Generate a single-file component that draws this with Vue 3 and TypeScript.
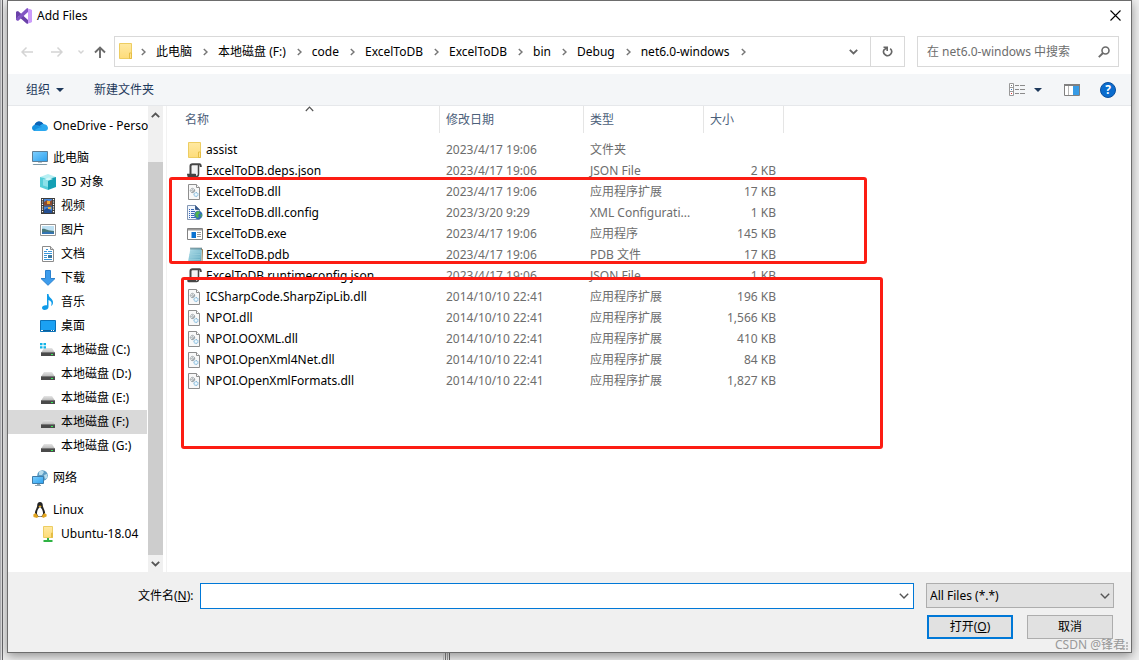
<script setup lang="ts">
import { ref } from 'vue'

interface NavItem {
  label: string
  icon: string
  level: 0 | 1
  group?: boolean
}

interface FileRow {
  name: string
  icon: string
  date: string
  type: string
  size: string
}

const crumbs: string[] = [
  '此电脑',
  '本地磁盘 (F:)',
  'code',
  'ExcelToDB',
  'ExcelToDB',
  'bin',
  'Debug',
  'net6.0-windows',
]

const navItems: NavItem[] = [
  { label: 'OneDrive - Perso', icon: 'onedrive', level: 0 },
  { label: '此电脑', icon: 'pc', level: 0, group: true },
  { label: '3D 对象', icon: 'cube', level: 1 },
  { label: '视频', icon: 'video', level: 1 },
  { label: '图片', icon: 'picture', level: 1 },
  { label: '文档', icon: 'document', level: 1 },
  { label: '下载', icon: 'download', level: 1 },
  { label: '音乐', icon: 'music', level: 1 },
  { label: '桌面', icon: 'desktop', level: 1 },
  { label: '本地磁盘 (C:)', icon: 'sysdrive', level: 1 },
  { label: '本地磁盘 (D:)', icon: 'drive', level: 1 },
  { label: '本地磁盘 (E:)', icon: 'drive', level: 1 },
  { label: '本地磁盘 (F:)', icon: 'drive', level: 1 },
  { label: '本地磁盘 (G:)', icon: 'drive', level: 1 },
  { label: '网络', icon: 'network', level: 0, group: true },
  { label: 'Linux', icon: 'linux', level: 0, group: true },
  { label: 'Ubuntu-18.04', icon: 'netfolder', level: 1 },
]

const files: FileRow[] = [
  { name: 'assist', icon: 'folder', date: '2023/4/17 19:06', type: '文件夹', size: '' },
  { name: 'ExcelToDB.deps.json', icon: 'json', date: '2023/4/17 19:06', type: 'JSON File', size: '2 KB' },
  { name: 'ExcelToDB.dll', icon: 'dll', date: '2023/4/17 19:06', type: '应用程序扩展', size: '17 KB' },
  { name: 'ExcelToDB.dll.config', icon: 'config', date: '2023/3/20 9:29', type: 'XML Configurati...', size: '1 KB' },
  { name: 'ExcelToDB.exe', icon: 'exe', date: '2023/4/17 19:06', type: '应用程序', size: '145 KB' },
  { name: 'ExcelToDB.pdb', icon: 'pdb', date: '2023/4/17 19:06', type: 'PDB 文件', size: '17 KB' },
  { name: 'ExcelToDB.runtimeconfig.json', icon: 'json', date: '2023/4/17 19:06', type: 'JSON File', size: '1 KB' },
  { name: 'ICSharpCode.SharpZipLib.dll', icon: 'dll', date: '2014/10/10 22:41', type: '应用程序扩展', size: '196 KB' },
  { name: 'NPOI.dll', icon: 'dll', date: '2014/10/10 22:41', type: '应用程序扩展', size: '1,566 KB' },
  { name: 'NPOI.OOXML.dll', icon: 'dll', date: '2014/10/10 22:41', type: '应用程序扩展', size: '410 KB' },
  { name: 'NPOI.OpenXml4Net.dll', icon: 'dll', date: '2014/10/10 22:41', type: '应用程序扩展', size: '84 KB' },
  { name: 'NPOI.OpenXmlFormats.dll', icon: 'dll', date: '2014/10/10 22:41', type: '应用程序扩展', size: '1,827 KB' },
]

const current = ref(12)
const search = ref('')
const fileName = ref('')
const filter = ref('all')
</script>

<template>
  <div class="desktop">
    <svg class="sprite" width="0" height="0" aria-hidden="true">
      <defs>
        <linearGradient id="g-folder" x1="0" y1="0" x2="0" y2="1">
          <stop offset="0" stop-color="#ffe9a2" /><stop offset="1" stop-color="#fddc7a" />
        </linearGradient>
        <linearGradient id="g-screen" x1="0" y1="0" x2="1" y2="1">
          <stop offset="0" stop-color="#7fd0ff" /><stop offset="1" stop-color="#2ba0ee" />
        </linearGradient>
        <linearGradient id="g-drive" x1="0" y1="0" x2="0" y2="1">
          <stop offset="0" stop-color="#e6e6e6" /><stop offset="1" stop-color="#bcbcbc" />
        </linearGradient>
        <linearGradient id="g-pdb" x1="0" y1="0" x2="1" y2="1">
          <stop offset="0" stop-color="#b9e4ee" /><stop offset="1" stop-color="#5aa5bd" />
        </linearGradient>
      </defs>

      <symbol id="i-vs" viewBox="0 0 16 16">
        <path d="M0 3.800L2 3L12 12V15.900L10.500 15.500L2 8V11L0 12Z" fill="#6a41a8" />
        <path d="M0 12L2 13L12 4V.1L10.500 .5L0 10.400Z" fill="#8256c4" />
        <path d="M11 .2L15.900 2V14L11 15.900L12 15V1Z" fill="#c08ff5" />
        <path d="M12 1L15.900 2V14L12 15Z" fill="#cb9bfa" />
      </symbol>
      <symbol id="i-folder" viewBox="0 0 16 16">
        <path d="M1.500 .5H13.500V15.500H1.500Z" fill="url(#g-folder)" stroke="#edcd62" />
        <path d="M11.500 10H13.500V15.500H11.500Z" fill="#ffe48f" stroke="#e5bd45" />
      </symbol>
      <symbol id="i-onedrive" viewBox="0 0 16 16">
        <path d="M2.500 7.500C3.500 3.500 8.500 1.500 11.500 6L13 9L3 12Z" fill="#0f5fb5" />
        <path d="M0 10C0 7.500 2.500 6 5 7L11 10L5 13H3C1.200 13 0 11.500 0 10Z" fill="#1490df" />
        <path d="M5 8L10.500 6C14 5.500 16 8 16 10C16 12 14.500 13 13 13H3C2.500 11 7 9.500 10 9Z" fill="#2ba8ef" />
        <path d="M2.500 7C3.500 3 8.500 2 11 5.800C8.500 6 8.500 8 7.500 8C6 7 4 6.300 2.500 7Z" fill="#0a64b7" />
      </symbol>
      <symbol id="i-pc" viewBox="0 0 16 16">
        <path d="M.5 1.500H15.500V11.500H.5Z" fill="url(#g-screen)" stroke="#5e7f97" />
        <path d="M6 12H10V13H6Z" fill="#b9c5cc" />
        <path d="M1.500 14H14.500L15.500 15H.5Z" fill="#7d98a6" />
      </symbol>
      <symbol id="i-cube" viewBox="0 0 16 16">
        <path d="M0 3L8 0L16 3L8 6Z" fill="#b7eff3" />
        <path d="M0 3L8 5V16L0 13Z" fill="#56ced9" />
        <path d="M16 3L8 5V16L16 13Z" fill="#149fb3" />
        <path d="M4 5L9 3.500L13 5L8 6.800Z" fill="#d5f7f9" />
        <path d="M3 5L8 6.500V13L3 11.500Z" fill="#8be1e9" />
      </symbol>
      <symbol id="i-video" viewBox="0 0 16 16">
        <path d="M1 0H15V16H1Z" fill="#3c3c3c" />
        <path d="M4 1H12V7.500H4ZM4 8.500H12V15H4Z" fill="#4687dc" />
        <path d="M4 4L7 2L9 4L12 2V7.500H4Z" fill="#8a4a30" />
        <path d="M7 3H10V6H7Z" fill="#f0a831" />
        <path d="M4 12L7 10L12 13V15H4Z" fill="#244f92" />
        <path d="M8 9H11V11H8Z" fill="#e5ad42" />
        <path d="M2.500 1V15M13.500 1V15" stroke="#fff" stroke-width="1.200" stroke-dasharray="1.200 1.200" />
      </symbol>
      <symbol id="i-picture" viewBox="0 0 16 16">
        <path d="M.5 2.500H15.500V13.500H.5Z" fill="#fff" stroke="#949494" />
        <path d="M2 4H14V12H2Z" fill="#bde0f3" />
        <path d="M2 7C5 6 7 9 14 9V12H2Z" fill="#48787a" />
        <path d="M2 10.500C6 9 10 10 14 10.500V12H2Z" fill="#3273b3" />
      </symbol>
      <symbol id="i-document" viewBox="0 0 16 16">
        <path d="M2.500 .5H10.500L13.500 3.500V15.500H2.500Z" fill="#fff" stroke="#8b8b8b" />
        <path d="M10.500 .5V3.500H13.500" fill="#ddd" stroke="#8b8b8b" />
        <path d="M6 3.500H8M4 5.500H7M8 5.500H12M4 7.500H12M4 9.500H7M4 11.500H7M4 13.500H12" stroke="#3b96d9" />
        <path d="M8 9H12V12H8Z" fill="#3c789f" />
      </symbol>
      <symbol id="i-download" viewBox="0 0 16 16">
        <path d="M5.500 .5H10.500V8.500H15L8 15.300L1 8.500H5.500Z" fill="#3d9cec" stroke="#2c82ce" />
      </symbol>
      <symbol id="i-music" viewBox="0 0 16 16">
        <path d="M7 0H8.500C8.500 4 13.500 4.500 13 9C12.800 10.500 12 11.500 11 12C12.500 8.500 11 7 8.500 6V13C8.500 15 6.500 16 4.500 16C2.800 16 2 15 2 13.800C2 12 4.500 10.700 7 11.300Z" fill="#0f9be9" />
      </symbol>
      <symbol id="i-desktop" viewBox="0 0 16 16">
        <path d="M.5 2.500H15.500V13.500H.5Z" fill="#1ba1f3" stroke="#0b72b9" />
        <path d="M1 12H15V13H1Z" fill="#0f5f98" />
        <path d="M1 12H3V13H1ZM11 12H12V13H11ZM13 12H14V13H13Z" fill="#fff" />
      </symbol>
      <symbol id="i-drive" viewBox="0 0 16 16">
        <path d="M4 6H12L14.500 10H1.500Z" fill="url(#g-drive)" />
        <path d="M1 10H15V14H1Z" fill="#4a4a4a" />
        <path d="M1 10H15V11H1Z" fill="#777" />
        <path d="M11 12H13V13H11Z" fill="#36ef57" />
      </symbol>
      <symbol id="i-sysdrive" viewBox="0 0 16 16">
        <path d="M4 6H12L14.500 10H1.500Z" fill="url(#g-drive)" />
        <path d="M1 10H15V14H1Z" fill="#4a4a4a" />
        <path d="M1 10H15V11H1Z" fill="#777" />
        <path d="M11 12H13V13H11Z" fill="#36ef57" />
        <path d="M0 1H2.500V3.300H0ZM3.500 1H6V3.300H3.500ZM0 4.200H2.500V6.500H0ZM3.500 4.200H6V6.500H3.500Z" fill="#12b4e8" />
      </symbol>
      <symbol id="i-network" viewBox="0 0 16 16">
        <circle cx="10.500" cy="5.500" r="5.300" fill="#5c9cc4" />
        <path d="M7 2C9 0 11 1 12 2L10 5L7 5ZM12 5L15 4V8L13 9Z" fill="#b7dcec" />
        <path d="M.5 6.500H11.500V13.500H.5Z" fill="url(#g-screen)" stroke="#3f7ca8" />
        <path d="M5 14H8V15H9V16H3V15H5Z" fill="#8fa6b3" />
      </symbol>
      <symbol id="i-linux" viewBox="0 0 16 16">
        <path d="M8 0C10 0 11 1.500 10.800 4C11.500 7 13.500 9 13 12L11 15H5L3 12C2.500 9 4.700 7 5.200 4C5 1.500 6 0 8 0Z" fill="#252525" />
        <path d="M8 5C9.500 6 11.300 9 11 12L9.500 14.500H6.500L5 12C4.700 9 6.500 6 8 5Z" fill="#fff" />
        <path d="M6.300 4.200L8 3.500L9.700 4.200L8 5.500Z" fill="#f0b323" />
        <path d="M1.300 12.500L3.500 11L6.500 14.500L5 16L1.500 15ZM14.700 12.500L12.500 11L9.700 14L11 16L14.500 14.500Z" fill="#e2a51f" />
      </symbol>
      <symbol id="i-netfolder" viewBox="0 0 16 16">
        <path d="M3.500 .5H12.500V11.500H3.500Z" fill="url(#g-folder)" stroke="#edcd62" />
        <path d="M11.500 7H12.500V11.500H11.500Z" fill="#ffe48f" stroke="#e5bd45" />
        <path d="M7 12H9V14H12.500V16H3.500V14H7Z" fill="#2fb344" />
      </symbol>
      <symbol id="i-json" viewBox="0 0 16 16">
        <path d="M4 2H12V13H4Z" fill="#f2f2f2" />
        <path d="M3.500 11.500V3C3.500 1.800 4.300 1.200 5.500 1.200H12.500C13.500 1.200 13.800 2 13.800 4" fill="none" stroke="#454545" stroke-width="2" />
        <path d="M11.500 2V11C11.500 13 10.500 13.500 9.500 13.500H2C1 13.500 .8 12.500 .8 11.500H8.500" fill="none" stroke="#454545" stroke-width="1.500" />
        <path d="M1 11H9V14H1Z" fill="#454545" />
      </symbol>
      <symbol id="i-dll" viewBox="0 0 16 16">
        <path d="M1.500 .5H9.500L12.500 3.500V15.500H1.500Z" fill="#f8f8f8" stroke="#8e8e8e" />
        <path d="M9.500 .5V3.500H12.500" fill="#fff" stroke="#8e8e8e" />
        <circle cx="5.500" cy="6.500" r="2.200" fill="#eee" stroke="#929ba0" stroke-dasharray="1.300 .5" />
        <circle cx="5.500" cy="6.500" r=".8" fill="#fff" stroke="#8a949a" stroke-width=".7" />
        <path d="M5 9L8 6M7 11L10 8" stroke="#929ba0" stroke-width=".8" />
        <circle cx="9" cy="10.500" r="2.100" fill="#cfe8f7" stroke="#7db5d8" stroke-dasharray="1.200 .5" />
        <circle cx="9" cy="10.500" r=".8" fill="#fff" />
      </symbol>
      <symbol id="i-config" viewBox="0 0 16 16">
        <path d="M.5 .5H8.500L12.500 4.500V14.500H.5Z" fill="#f2f7fd" stroke="#8397b4" />
        <path d="M8.500 .5V4.500H12.500" fill="#35588c" stroke="#43638f" />
        <path d="M2 4.500H3M4 4.500H7M2 6.500H3M4 6.500H8M2 8.500H3M4 8.500H7M2 10.500H3M4 10.500H7M2 12.500H3M4 12.500H8" stroke="#3767b7" />
        <circle cx="11.300" cy="10" r="4.200" fill="#3270b5" />
        <path d="M9 7L12 6L13 8L11 10L12 12L10 13L8 10ZM13.500 9L15.300 10L14 12.500Z" fill="#51b34c" />
      </symbol>
      <symbol id="i-exe" viewBox="0 0 16 16">
        <path d="M.5 2.500H15.500V13.500H.5Z" fill="#fff" stroke="#828282" />
        <path d="M1 3H15V4.500H1Z" fill="#9b9b9b" />
        <path d="M4.500 6H9V12H4.500Z" fill="#0b72d1" />
        <path d="M10 6.500H14M10 8.500H14M10 10.500H14" stroke="#999" />
      </symbol>
      <symbol id="i-pdb" viewBox="0 0 16 16">
        <path d="M3.500 1H15L14 15H1Z" fill="url(#g-pdb)" />
        <path d="M14 2L15.500 2.500L15 14L13.500 15.500" fill="none" stroke="#937b50" />
        <path d="M3.500 1.500H15" stroke="#4d6870" stroke-width="2" stroke-dasharray="1 1" />
        <path d="M3 5H13.500M2.500 7.500H13.300M2.300 10H13M2 12.500H13" stroke="#9bd0dd" stroke-width=".7" />
        <path d="M.5 15H13.500" stroke="#567f8e" />
      </symbol>
      <symbol id="i-down" viewBox="0 0 10 6">
        <path d="M.8 .8L5 5L9.200 .8" fill="none" stroke="currentColor" stroke-width="1.400" />
      </symbol>
      <symbol id="i-tri" viewBox="0 0 8 4">
        <path d="M0 0H8L4 4Z" fill="currentColor" />
      </symbol>
    </svg>

    <main class="dialog" role="dialog" aria-labelledby="dialog-title">
      <header class="titlebar">
        <svg class="ic" aria-hidden="true"><use href="#i-vs" /></svg>
        <h1 id="dialog-title">Add Files</h1>
        <button class="close" type="button" aria-label="Close">
          <svg width="11" height="11" viewBox="0 0 11 11"><path d="M.5 .5L10.500 10.500M10.500 .5L.5 10.500" stroke="#000" stroke-width="1.100" /></svg>
        </button>
      </header>

      <div class="addressrow">
        <button class="hist dim" type="button" aria-label="Back">
          <svg width="12" height="12" viewBox="0 0 12 12"><path d="M12 6H1M5.500 1.500L1 6L5.500 10.500" fill="none" stroke="currentColor" stroke-width="1.500" /></svg>
        </button>
        <button class="hist dim" type="button" aria-label="Forward">
          <svg width="12" height="12" viewBox="0 0 12 12"><path d="M0 6H11M6.500 1.500L11 6L6.500 10.500" fill="none" stroke="currentColor" stroke-width="1.500" /></svg>
        </button>
        <button class="recent dim" type="button" aria-label="Recent locations">
          <svg width="6" height="4" viewBox="0 0 6 4"><path d="M.5 .5L3 3L5.500 .5" fill="none" stroke="currentColor" stroke-width="1.400" /></svg>
        </button>
        <button class="up" type="button" aria-label="Up">
          <svg width="12" height="12" viewBox="0 0 12 12"><path d="M6 12V1.500M1 6.500L6 1.500L11 6.500" fill="none" stroke="currentColor" stroke-width="1.900" /></svg>
        </button>
        <div class="address">
          <svg class="ic" aria-hidden="true"><use href="#i-folder" /></svg>
          <nav class="crumbs" aria-label="Path">
            <svg class="sep" width="5" height="8" viewBox="0 0 5 8"><path d="M.8 1L4 4L.8 7" fill="none" stroke="currentColor" stroke-width="1.500" /></svg>
            <template v-for="(crumb, i) in crumbs" :key="i">
              <button type="button">{{ crumb }}</button>
              <svg class="sep" width="5" height="8" viewBox="0 0 5 8"><path d="M.8 1L4 4L.8 7" fill="none" stroke="currentColor" stroke-width="1.500" /></svg>
            </template>
          </nav>
          <button class="history" type="button" aria-label="Previous locations">
            <svg width="9" height="6" viewBox="0 0 9 6"><path d="M.8 .8L4.500 4.500L8.200 .8" fill="none" stroke="currentColor" stroke-width="1.800" /></svg>
          </button>
          <button class="refresh" type="button" aria-label="Refresh">
            <svg width="11" height="11" viewBox="0 0 11 11"><path d="M1.500 1.200H5.200V5M8.200 2.600A4 4 0 1 1 2 3.800L4.800 1.800" fill="none" stroke="currentColor" stroke-width="1.600" /></svg>
          </button>
        </div>
        <label class="search">
          <input v-model="search" type="text" placeholder="在 net6.0-windows 中搜索" aria-label="搜索" />
          <svg width="12" height="12" viewBox="0 0 12 12" aria-hidden="true"><circle cx="7.500" cy="4.500" r="3.500" fill="none" stroke="#6b6b6b" stroke-width="1.600" /><path d="M5 7L.8 11.200" stroke="#6b6b6b" stroke-width="1.900" /></svg>
        </label>
      </div>

      <div class="toolbar">
        <button class="organize" type="button">组织 <svg width="8" height="4"><use href="#i-tri" /></svg></button>
        <button class="newfolder" type="button">新建文件夹</button>
        <button class="view" type="button" aria-label="View">
          <svg width="16" height="13" viewBox="0 0 16 13">
            <path d="M.5 .5H4.500V12.500H.5ZM.5 4.500H4.500M.5 8.500H4.500" fill="#fff" stroke="#999" />
            <path d="M2 2H3V3H2Z" fill="#777" /><path d="M2 6H3V7H2Z" fill="#3779c1" /><path d="M2 10H3V11H2Z" fill="#d33" />
            <path d="M6 2.500H10M11 2.500H16M6 6.500H10M11 6.500H16M6 10.500H10M11 10.500H16" stroke="#8b8b8b" />
          </svg>
          <svg width="8" height="4"><use href="#i-tri" /></svg>
        </button>
        <button class="preview" type="button" aria-label="Preview pane">
          <svg width="16" height="12" viewBox="0 0 16 12">
            <path d="M.5 .5H15.500V11.500H.5Z" fill="#fff" stroke="#808080" />
            <path d="M0 0H16V2H0Z" fill="#808080" />
            <path d="M4.500 2V11" stroke="#b5b5b5" />
            <path d="M9 2H15V11H9Z" fill="#379be5" />
          </svg>
        </button>
        <button class="help" type="button" aria-label="Help">?</button>
      </div>

      <div class="content">
        <aside class="side">
          <ul class="nav">
            <li v-for="(item, i) in navItems" :key="i" :class="{ group: item.group }">
              <button type="button" :class="{ child: item.level === 1, active: i === current }" @click="current = i">
                <svg class="ic" aria-hidden="true"><use :href="`#i-${item.icon}`" /></svg>
                <span>{{ item.label }}</span>
              </button>
            </li>
          </ul>
          <div class="scroll" aria-hidden="true">
            <div class="arrow"><svg class="flip" width="9" height="6" viewBox="0 0 9 6"><path d="M.8 .8L4.500 4.500L8.200 .8" fill="none" stroke="currentColor" stroke-width="1.800" /></svg></div>
            <div class="track"><div class="thumb"></div></div>
            <div class="arrow"><svg width="9" height="6" viewBox="0 0 9 6"><path d="M.8 .8L4.500 4.500L8.200 .8" fill="none" stroke="currentColor" stroke-width="1.800" /></svg></div>
          </div>
        </aside>

        <section class="files">
          <table>
            <colgroup>
              <col class="c-name" /><col class="c-date" /><col class="c-type" /><col class="c-size" />
            </colgroup>
            <thead>
              <tr>
                <th scope="col" aria-sort="ascending">
                  名称
                  <svg class="sort" width="9" height="6" viewBox="0 0 9 6"><path d="M.8 5L4.500 1.200L8.200 5" fill="none" stroke="#555" stroke-width="1.200" /></svg>
                </th>
                <th scope="col">修改日期</th>
                <th scope="col">类型</th>
                <th scope="col">大小</th>
              </tr>
            </thead>
            <tbody>
              <tr v-for="file in files" :key="file.name">
                <td class="name">
                  <div><svg class="ic" aria-hidden="true"><use :href="`#i-${file.icon}`" /></svg>{{ file.name }}</div>
                </td>
                <td>{{ file.date }}</td>
                <td>{{ file.type }}</td>
                <td class="size">{{ file.size }}</td>
              </tr>
            </tbody>
          </table>
          <div class="mark mark-build"></div>
          <div class="mark mark-libs"></div>
        </section>
      </div>

      <footer class="footer">
        <div class="namerow">
          <label for="file-name">文件名(<u>N</u>):</label>
          <div class="combo">
            <input id="file-name" v-model="fileName" type="text" />
            <button type="button" aria-label="Recent file names"><svg width="10" height="6"><use href="#i-down" /></svg></button>
          </div>
          <div class="filter">
            <select v-model="filter" aria-label="File type">
              <option value="all">All Files (*.*)</option>
            </select>
            <svg width="10" height="6" aria-hidden="true"><use href="#i-down" /></svg>
          </div>
        </div>
        <div class="actions">
          <button class="primary" type="button">打开(<u>O</u>)</button>
          <button type="button">取消</button>
        </div>
        <svg class="grip" width="8" height="8" viewBox="0 0 8 8" aria-hidden="true"><path d="M6 0H8V2H6ZM3 3H5V5H3ZM6 3H8V5H6ZM0 6H2V8H0ZM3 6H5V8H3ZM6 6H8V8H6Z" fill="#bdbdbd" /></svg>
        <span class="watermark">CSDN @锋君</span>
      </footer>
    </main>
    <div class="splitter"></div>
  </div>
</template>

<style>
body {
  margin: 0;
}
</style>

<style scoped>
.desktop {
  box-sizing: border-box;
  position: relative;
  display: flex;
  min-height: 100vh;
  padding: 0 7px 7px;
  overflow: hidden;
  background: linear-gradient(90deg, #b4b4b8 0 1px, #e4e4e4 1px 2px, #68686c 2px 3px, #f0f0f0 3px);
  color: #000;
  font-family: 'Noto Sans', 'Noto Sans CJK SC', sans-serif;
  font-size: 12px;
  line-height: 16px;
}
.sprite {
  position: absolute;
}
button,
input,
select {
  box-sizing: border-box;
  margin: 0;
  padding: 0;
  border: 0;
  border-radius: 0;
  background: none;
  color: inherit;
  font: inherit;
  outline: none;
}
button {
  display: flex;
  align-items: center;
  white-space: nowrap;
}
svg {
  flex: none;
  display: block;
}
.ic {
  width: 16px;
  height: 16px;
}
.dialog {
  flex: 1;
  min-width: 0;
  display: flex;
  flex-direction: column;
  border: 1px solid #6d6d6d;
  background: #fff;
  box-shadow: 0 3px 10px rgba(0, 0, 0, 0.4);
}
.splitter {
  position: absolute;
  left: 443px;
  bottom: 0;
  width: 7px;
  height: 7px;
  background: linear-gradient(90deg, #aaa 0 1px, transparent 1px 2px, #666 2px 3px, transparent 3px 4px, #888 4px 5px, transparent 5px 6px, #555 6px);
}

.titlebar {
  display: flex;
  align-items: center;
  height: 29px;
  padding: 0 10px 0 8px;
}
.titlebar h1 {
  flex: 1;
  margin: 0 0 0 5px;
  font-size: 12px;
  font-weight: 400;
}

.addressrow {
  display: flex;
  align-items: center;
  height: 31px;
  padding: 6px 12px 7px 13px;
}
.hist {
  margin-right: 18px;
}
.recent {
  margin: 0 10px 0 -3px;
}
.up {
  margin-right: 8px;
  color: #6b6b6b;
}
.dim {
  color: #d4d4d4;
}
.address {
  box-sizing: border-box;
  flex: 1;
  min-width: 0;
  display: flex;
  align-items: stretch;
  height: 31px;
  border: 1px solid #d9d9d9;
}
.address > .ic {
  margin: 6px 6px 0 3px;
}
.crumbs {
  flex: 1;
  min-width: 0;
  display: flex;
  align-items: center;
  gap: 10px;
  overflow: hidden;
  padding-left: 1px;
}
.crumbs button {
  padding-right: 1px;
}
.sep {
  color: #777;
}
.history {
  margin-right: 12px;
  color: #666;
}
.refresh {
  justify-content: center;
  width: 34px;
  border-left: 1px solid #d9d9d9;
  color: #666;
}
.search {
  box-sizing: border-box;
  display: flex;
  align-items: center;
  width: 202px;
  height: 31px;
  margin-left: 12px;
  padding: 0 8px 0 9px;
  border: 1px solid #d9d9d9;
}
.search input {
  flex: 1;
  min-width: 0;
}
.search input::placeholder {
  color: #6d6d6d;
  opacity: 1;
}

.toolbar {
  display: flex;
  align-items: center;
  height: 31px;
  padding: 0 15px 0 18px;
  border-bottom: 1px solid #e6e8eb;
  background: #f4f6f8;
  color: #1e395b;
}
.organize {
  gap: 6px;
}
.newfolder {
  margin-left: 30px;
}
.view {
  gap: 9px;
  margin-left: auto;
}
.preview {
  margin-left: 22px;
}
.help {
  justify-content: center;
  width: 16px;
  height: 16px;
  margin-left: 20px;
  border: 1px solid #0a4f9e;
  border-radius: 50%;
  background: #0a6cce;
  color: #fff;
  font-weight: 700;
}

.content {
  flex: 1;
  display: flex;
  min-height: 0;
}
.side {
  display: flex;
  width: 158px;
  border-right: 1px solid #f2f2f2;
}
.nav {
  flex: 1;
  min-width: 0;
  margin: 0;
  padding: 8px 1px 0 0;
  list-style: none;
}
.nav .group {
  margin-top: 8px;
}
.nav button {
  width: 100%;
  height: 24px;
  gap: 5px;
  padding-left: 24px;
}
.nav .child {
  padding-left: 32px;
}
.nav .active {
  background: #d9d9d9;
}
.scroll {
  display: flex;
  flex-direction: column;
  width: 15px;
  margin-right: 3px;
  background: #f0f0f0;
  color: #555;
}
.arrow {
  display: flex;
  align-items: center;
  justify-content: center;
  height: 17px;
}
.flip {
  transform: rotate(180deg);
}
.track {
  flex: 1;
  display: flex;
  flex-direction: column;
  justify-content: flex-end;
}
.thumb {
  height: 91%;
  background: #cdcdcd;
}

.files {
  flex: 1;
  position: relative;
  min-width: 0;
}
table {
  width: 617px;
  table-layout: fixed;
  border-collapse: separate;
  border-spacing: 0;
}
.c-name {
  width: 273px;
}
.c-date {
  width: 144px;
}
.c-type {
  width: 120px;
}
.c-size {
  width: 80px;
}
th {
  position: relative;
  box-sizing: border-box;
  height: 27px;
  padding: 0 6px;
  border-right: 1px solid #e5e5e5;
  color: #4c607a;
  font-weight: 400;
  text-align: left;
}
th:first-child {
  padding-left: 18px;
}
.sort {
  position: absolute;
  top: 0;
  left: 138px;
}
tbody::before {
  content: '';
  display: block;
  height: 6px;
}
td {
  height: 21px;
  padding: 0 6px;
  color: #6d6d6d;
  white-space: nowrap;
}
td.name {
  padding-left: 20px;
  color: #000;
}
td.name div {
  display: flex;
  align-items: center;
  gap: 3px;
}
td.size {
  padding-right: 8px;
  text-align: right;
}
.mark {
  position: absolute;
  box-sizing: border-box;
  border: 3px solid #fc1d13;
  border-radius: 3px;
}
.mark-build {
  top: 71px;
  left: 2px;
  width: 698px;
  height: 87px;
}
.mark-libs {
  top: 171px;
  left: 14px;
  width: 702px;
  height: 172px;
}

.footer {
  position: relative;
  height: 69px;
  padding: 11px 17px 0 130px;
  background: #f0f0f0;
}
.namerow {
  display: flex;
  align-items: flex-start;
}
.namerow label {
  line-height: 26px;
}
.combo {
  box-sizing: border-box;
  flex: 1;
  display: flex;
  height: 26px;
  margin: 0 12px 0 6px;
  padding: 0 4px;
  border: 1px solid #0078d7;
  background: #fff;
}
.combo input {
  flex: 1;
  min-width: 0;
}
.combo button,
.filter svg {
  color: #555;
}
.filter {
  position: relative;
  width: 188px;
}
.filter select {
  display: block;
  width: 100%;
  height: 25px;
  padding: 0 3px;
  border: 1px solid #adadad;
  background: #e1e1e1;
  appearance: none;
}
.filter svg {
  position: absolute;
  top: 10px;
  right: 4px;
  pointer-events: none;
}
.actions {
  display: flex;
  justify-content: flex-end;
  gap: 14px;
  margin: 6px 1px 0 0;
}
.actions button {
  justify-content: center;
  width: 86px;
  height: 24px;
  border: 1px solid #adadad;
  background: #e1e1e1;
}
.actions .primary {
  border: 2px solid #0078d7;
}
.grip {
  position: absolute;
  right: 3px;
  bottom: 2px;
}
.watermark {
  position: absolute;
  right: 6px;
  bottom: 0;
  color: #999;
  font-size: 12px;
  line-height: 14px;
}
</style>
